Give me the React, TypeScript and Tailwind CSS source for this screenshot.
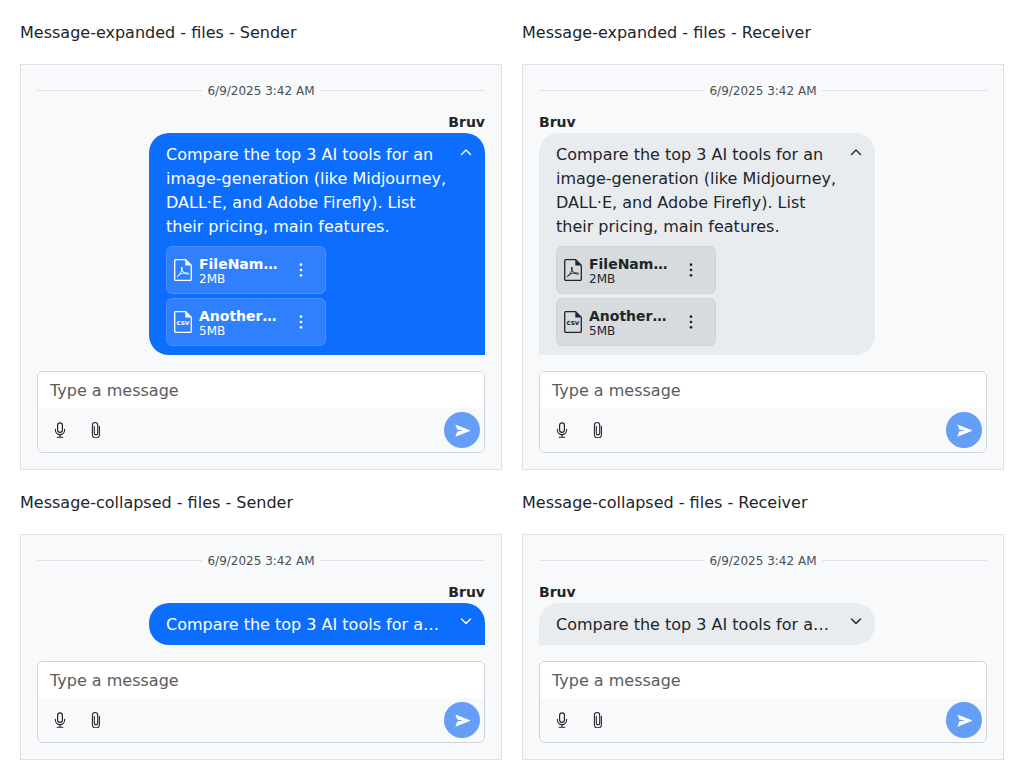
import React from "react";

const FONT = "font-['DejaVu_Sans',sans-serif]";

const PAGE = "M1.7 .7H11.6L17.3 6.3V20.1A1.1 1.1 0 0 1 16.2 21.3H1.8A1.1 1.1 0 0 1 .7 20.1V1.8A1.1 1.1 0 0 1 1.7 .7Z";

function PdfIcon() {
  return (
    <svg width="18" height="22" viewBox="0 0 18 22" fill="none" className="shrink-0">
      <path d={PAGE} stroke="currentColor" strokeWidth="1.3" />
      <path d="M11.3 1V6.6H17L11.3 1Z" fill="currentColor" />
      <path d="M3.4 17.6C4.8 17.4 7 13.6 8 10.6C8.4 9 8.2 7.8 7.7 8C7 8.4 7.6 11.2 10 13.8C11.4 15 14.6 15.6 14.7 14.6C14.6 13.8 10.6 13.6 7.4 14.6C5.2 15.4 2.8 17.2 3.4 17.6Z" stroke="currentColor" strokeWidth="1" />
    </svg>
  );
}

function CsvIcon() {
  return (
    <svg width="18" height="22" viewBox="0 0 18 22" fill="none" className="shrink-0">
      <path d={PAGE} stroke="currentColor" strokeWidth="1.3" />
      <path d="M11.3 1V6.6H17L11.3 1Z" fill="currentColor" />
      <text x="9" y="14.2" textAnchor="middle" fontSize="7" fontWeight="700" fontFamily="'DejaVu Sans',sans-serif" fill="currentColor">csv</text>
    </svg>
  );
}

function Kebab() {
  return (
    <svg width="16" height="16" viewBox="0 0 16 16" fill="currentColor" className="shrink-0">
      <circle cx="8" cy="2.7" r="1.35" />
      <circle cx="8" cy="8" r="1.35" />
      <circle cx="8" cy="13.3" r="1.35" />
    </svg>
  );
}

function Chevron({ up }: { up: boolean }) {
  return (
    <svg width="16" height="16" viewBox="0 0 16 16" fill="none" stroke="currentColor" strokeWidth="1.4" strokeLinecap="round" strokeLinejoin="round" className="shrink-0">
      {up ? <path d="M3.5 10.5 8 6l4.5 4.5" /> : <path d="M3.5 6 8 10.5 12.5 6" />}
    </svg>
  );
}

function Mic() {
  return (
    <svg width="16" height="16" viewBox="0 0 16 16" fill="none" stroke="#212529" className="shrink-0">
      <rect x="5.6" y=".8" width="4.8" height="9.6" rx="2.4" strokeWidth="1.2" />
      <path d="M3.4 7.2V8a4.6 4.6 0 0 0 9.2 0v-.8" strokeWidth="1.1" strokeLinecap="round" />
      <path d="M8 12.6V15M5.2 15.3h5.6" strokeWidth="1.1" strokeLinecap="round" />
    </svg>
  );
}

function Clip() {
  return (
    <svg width="16" height="16" viewBox="0 0 16 16" fill="none" stroke="#212529" strokeWidth="1.1" strokeLinecap="round" className="shrink-0">
      <path d="M6.3 4.2V11.2A1.7 1.7 0 0 0 9.7 11.2V3.2A2.5 2.5 0 0 0 4.4 3.2V12.4A3.4 3.4 0 0 0 11.4 12.4V4.2" />
    </svg>
  );
}

function Send() {
  return (
    <svg width="15" height="15" viewBox="0 0 16 16" fill="#fff" className="shrink-0">
      <path d="M.4 1.6 15.8 7.6a.5.5 0 0 1 0 .9L.4 14.6 2.4 9l6.4-1-6.4-1.1Z" />
    </svg>
  );
}

function FileRow({ sender, kind, name, size }: { sender: boolean; kind: "pdf" | "csv"; name: string; size: string }) {
  return (
    <div
      className={
        "flex items-center w-40 h-12 rounded-md border pl-[7px] pr-4 " +
        (sender ? "border-[#4a90fb] bg-[#3080fd] text-white" : "bg-[#d8dbde] border-[#ced4da] text-[#212529]")
      }
    >
      {kind === "pdf" ? <PdfIcon /> : <CsvIcon />}
      <div className="min-w-0 w-[80px] ml-[7px] self-start mt-[9px]">
        <div className="text-sm leading-[17px] font-bold truncate">{name}</div>
        <div className="text-xs leading-[14px] -mt-px">{size}</div>
      </div>
      <div className="ml-auto"><Kebab /></div>
    </div>
  );
}

function Divider() {
  return (
    <div className="flex items-center gap-[5px] h-[18px] text-xs text-[#495057]">
      <div className="flex-1 h-px bg-[#dee2e6]" />
      <span className="h-[18px] leading-[20px]">6/9/2025 3:42 AM</span>
      <div className="flex-1 h-px bg-[#dee2e6]" />
    </div>
  );
}

function Composer() {
  return (
    <div className="mt-4 rounded-md border border-[#ced4da] overflow-hidden">
      <div className="bg-white h-9 pl-3 leading-[38px] text-base text-[#595c5f]">Type a message</div>
      <div className="flex items-center h-11 bg-[#f8f9fa] pl-[14px] pr-1">
        <Mic />
        <div className="ml-5"><Clip /></div>
        <div className="ml-auto w-9 h-9 rounded-full bg-[#649ef6] flex items-center justify-center"><Send /></div>
      </div>
    </div>
  );
}

function Panel({ title, sender, expanded }: { title: string; sender: boolean; expanded: boolean }) {
  return (
    <div className="w-[482px]">
      <div className="h-6 leading-[26px] text-base text-[#212529] mb-5">{title}</div>
      <div className="border border-[#dee2e6] bg-[#f8f9fa] px-4 pt-4 pb-4">
        <Divider />
        <div className={"flex flex-col " + (sender ? "items-end" : "items-start")}>
          <div className="mt-[14px] h-5 leading-[19px] text-sm font-bold text-[#212529]">Bruv</div>
          <div
            className={
              "w-[336px] rounded-[20px] pl-[17px] " +
              (sender ? "rounded-br-none bg-[#0d6efd] text-white" : "rounded-bl-none bg-[#e9ecef] text-[#212529]")
            }
          >
            <div className="flex">
              <div className={"w-[284px] pt-[10px] " + (expanded ? "pb-[9px]" : "pb-2")}>
                {expanded ? (
                  <p className="text-base leading-6">Compare the top 3 AI tools for an image-generation (like Midjourney, DALL·E, and Adobe Firefly). List their pricing, main features.</p>
                ) : (
                  <p className="text-base leading-6 truncate w-[274px]">Compare the top 3 AI tools for an image-generation</p>
                )}
                {expanded && (
                  <div className="mt-[7px] flex flex-col gap-1">
                    <FileRow sender={sender} kind="pdf" name="FileName.pdf" size="2MB" />
                    <FileRow sender={sender} kind="csv" name="AnotherFile.csv" size="5MB" />
                  </div>
                )}
              </div>
              <div className={"ml-2 " + (expanded ? "pt-[11px]" : "pt-[10px]")}><Chevron up={expanded} /></div>
            </div>
          </div>
        </div>
        <Composer />
      </div>
    </div>
  );
}

export default function App() {
  return (
    <div className={"bg-white min-h-[780px] p-5 grid grid-cols-[482px_482px] gap-x-5 gap-y-5 content-start " + FONT}>
      <Panel title="Message-expanded - files - Sender" sender expanded />
      <Panel title="Message-expanded - files - Receiver" sender={false} expanded />
      <Panel title="Message-collapsed - files - Sender" sender expanded={false} />
      <Panel title="Message-collapsed - files - Receiver" sender={false} expanded={false} />
    </div>
  );
}
